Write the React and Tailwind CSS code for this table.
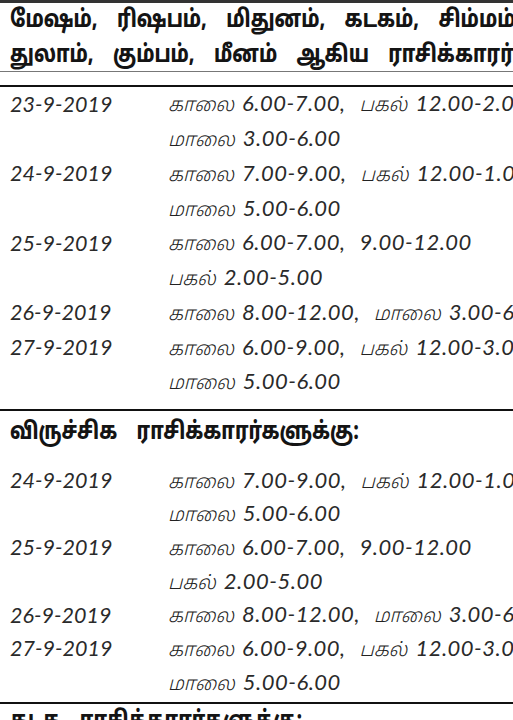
import React from "react";

const sec1 = [
  ["23-9-2019", "காலை 6.00-7.00, பகல் 12.00-2.00,"],
  ["", "மாலை 3.00-6.00"],
  ["24-9-2019", "காலை 7.00-9.00, பகல் 12.00-1.00,"],
  ["", "மாலை 5.00-6.00"],
  ["25-9-2019", "காலை 6.00-7.00, 9.00-12.00"],
  ["", "பகல் 2.00-5.00"],
  ["26-9-2019", "காலை 8.00-12.00, மாலை 3.00-6.00"],
  ["27-9-2019", "காலை 6.00-9.00, பகல் 12.00-3.00,"],
  ["", "மாலை 5.00-6.00"],
];

const sec2 = [
  ["24-9-2019", "காலை 7.00-9.00, பகல் 12.00-1.00,"],
  ["", "மாலை 5.00-6.00"],
  ["25-9-2019", "காலை 6.00-7.00, 9.00-12.00"],
  ["", "பகல் 2.00-5.00"],
  ["26-9-2019", "காலை 8.00-12.00, மாலை 3.00-6.00"],
  ["27-9-2019", "காலை 6.00-9.00, பகல் 12.00-3.00,"],
  ["", "மாலை 5.00-6.00"],
];

const isTamil = (w) => /[\u0B80-\u0BFF]/.test(w);

function TimeText({ text }) {
  const words = text.split(" ");
  return (
    <div className="whitespace-nowrap">
      {words.map((w, i) =>
        isTamil(w) ? (
          <span
            key={i}
            className="inline-block italic font-light text-[19px] mr-[8px] font-['Noto_Sans_Tamil','Lohit_Tamil',sans-serif]"
          >
            {w}
          </span>
        ) : (
          <span
            key={i}
            className="inline-block italic text-[22px] tracking-[0.5px] mr-[14px] text-[#2a2a2a] font-['Lato','Open_Sans',sans-serif]"
          >
            {w}
          </span>
        )
      )}
    </div>
  );
}

function Rows({ rows, h }) {
  return (
    <div className="flex flex-col">
      {rows.map(([d, t], i) => (
        <div
          key={i}
          className={`flex items-center whitespace-nowrap text-[#222] ${h}`}
        >
          <div className="w-[168px] shrink-0 pl-[10px] italic text-[21.5px] leading-none text-[#2a2a2a] font-['Lato','Open_Sans',sans-serif]">
            {d}
          </div>
          <div className="leading-none">
            <TimeText text={t} />
          </div>
        </div>
      ))}
    </div>
  );
}

function Heading({ children, lh = "leading-[36px]" }) {
  return (
    <div className={`pl-[10px] whitespace-nowrap ${lh}`}>
      <div className="inline-block origin-left scale-x-[0.8] font-extrabold text-[24px] text-[#141414] [word-spacing:18px] font-['Noto_Sans_Tamil','Lohit_Tamil','Noto_Sans',sans-serif]">
        {children}
      </div>
    </div>
  );
}

export default function App() {
  return (
    <div className="w-[513px] h-[720px] overflow-hidden bg-white">
      <div className="h-[3px] bg-[#333]" />
      <div className="h-[69px] border-b border-[#777]">
        <Heading>மேஷம், ரிஷபம், மிதுனம், கடகம், சிம்மம், கன்னி,</Heading>
        <div className="-mt-[1px]">
          <Heading>துலாம், கும்பம், மீனம் ஆகிய ராசிக்காரர்களுக்கு:</Heading>
        </div>
      </div>
      <div className="h-[13px]" />
      <div className="border-t-2 border-[#111] pb-[9px]">
        <Rows rows={sec1} h="h-[34.75px]" />
      </div>
      <div className="border-t-2 border-[#111]">
        <Heading lh="leading-[44px]">விருச்சிக ராசிக்காரர்களுக்கு:</Heading>
        <div className="pt-[9px] pb-[2px]">
          <Rows rows={sec2} h="h-[33.7px]" />
        </div>
      </div>
      <div className="border-t-2 border-[#111]">
        <Heading>கடக ராசிக்காரர்களுக்கு:</Heading>
      </div>
    </div>
  );
}
